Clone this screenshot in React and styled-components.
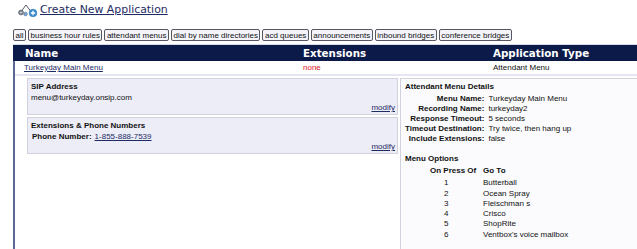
import styled, { createGlobalStyle } from 'styled-components';

const GlobalStyle = createGlobalStyle`
  body {
    margin: 0;
    background: #ffffff;
    font-family: "Liberation Sans", Arial, sans-serif;
    font-size: 8px;
    color: #111111;
    overflow: hidden;
  }
`;

const Page = styled.div`
  width: 637px;
  height: 249px;
  overflow: hidden;
`;

const TitleBar = styled.div`
  display: flex;
  align-items: center;
  gap: 2px;
  padding: 1px 0 0 17px;
  height: 17px;
`;

const Title = styled.a`
  font-family: "DejaVu Sans", Verdana, sans-serif;
  font-size: 10.9px;
  color: #1d2b63;
  text-decoration: underline;
`;

const Filters = styled.div`
  display: flex;
  gap: 2px;
  padding: 11px 0 0 13px;
`;

const FilterButton = styled.span`
  display: inline-flex;
  align-items: center;
  height: 12px;
  padding: 0 1.5px;
  border: 1px solid #56565e;
  border-radius: 2px;
  background: #f4f4fa;
  font-size: 8px;
  color: #111;
  box-sizing: border-box;
`;

const Table = styled.div`
  margin: 3px 0 0 13px;
  width: 640px;
`;

const HeaderRow = styled.div`
  display: grid;
  grid-template-columns: 278px 190px 1fr;
  height: 16px;
  align-items: center;
  padding-left: 12px;
  background: #0c1a4a;
  color: #ffffff;
  font-family: "DejaVu Sans", Verdana, sans-serif;
  font-weight: bold;
  font-size: 10.3px;
  border-top: 1px solid #d8dbe6;
`;

const Body = styled.div`
  border-left: 2px solid #5b6896;
  height: 200px;
`;

const DataRow = styled.div`
  display: grid;
  grid-template-columns: 279px 190px 1fr;
  height: 13px;
  align-items: center;
  padding: 0 0 0 9px;
  border-bottom: 2px solid #e6e6f2;
`;

const NameLink = styled.a`
  color: #1d2b63;
  text-decoration: underline;
`;

const Cell = styled.span`
  color: ${({ $red }) => ($red ? '#e0141e' : '#111')};
`;

const Detail = styled.div`
  display: grid;
  grid-template-columns: 371px 1fr;
  gap: 2px;
  padding: 2px 0 0 12px;
`;

const LeftCol = styled.div`
  display: flex;
  flex-direction: column;
  gap: 2px;
`;

const InfoBox = styled.div`
  background: #ededf8;
  border: 1px solid #d2d2de;
  padding: 2px 2px 1px 3px;
  height: 37px;
  box-sizing: border-box;
  display: flex;
  flex-direction: column;
`;

const BoxTitle = styled.div`
  font-weight: bold;
  line-height: 11px;
`;

const BoxLine = styled.div`
  line-height: 11px;
  padding-left: ${({ $indent }) => ($indent ? '1px' : '0')};
`;

const Label = styled.b`
  margin-right: 3px;
`;

const Link = styled.a`
  color: #1d2b63;
  text-decoration: underline;
`;

const Modify = styled.a`
  margin-top: auto;
  align-self: flex-end;
  color: #1d2b63;
  text-decoration: underline;
  line-height: 10px;
`;

const RightBox = styled.div`
  background: #fbfbfd;
  border: 1px solid #d2d2de;
  border-right: none;
  padding: 3px 0 0 4px;
  height: 180px;
`;

const DetailGrid = styled.div`
  display: grid;
  grid-template-columns: max-content 1fr;
  column-gap: 4px;
  line-height: 10px;
  margin-top: 2px;
  white-space: nowrap;
`;

const DetailLabel = styled.span`
  font-weight: bold;
  text-align: right;
`;

const SectionTitle = styled.div`
  font-weight: bold;
  line-height: 10px;
  margin-top: ${({ $gap }) => $gap || 0};
`;

const OptionsGrid = styled.div`
  display: grid;
  grid-template-columns: 78px 1fr;
  line-height: 10.3px;
  margin-top: 2px;
  white-space: nowrap;
`;

const PressCell = styled.span`
  padding-left: ${({ $head }) => ($head ? '25px' : '39px')};
  font-weight: ${({ $head }) => ($head ? 'bold' : 'normal')};
  margin-bottom: ${({ $head }) => ($head ? '2px' : '0')};
`;

const GoCell = styled.span`
  font-weight: ${({ $head }) => ($head ? 'bold' : 'normal')};
  margin-bottom: ${({ $head }) => ($head ? '2px' : '0')};
`;

function AppIcon() {
  return (
    <svg width="21" height="15" viewBox="0 0 21 15">
      <path d="M3 11 L9 3 L15 11" fill="none" stroke="#555a66" strokeWidth="1" />
      <circle cx="4" cy="10.5" r="2.4" fill="#8a9099" stroke="#5a5f69" strokeWidth="0.8" />
      <circle cx="4" cy="10.5" r="0.8" fill="#e0e3e8" />
      <circle cx="8.5" cy="12" r="1.8" fill="#7fa5cc" stroke="#50709a" strokeWidth="0.6" />
      <circle cx="16" cy="11" r="3.8" fill="#3b8fd6" stroke="#236aa8" strokeWidth="0.6" />
      <path d="M16 8.8 V13.2 M13.8 11 H18.2" stroke="#ffffff" strokeWidth="1.3" />
    </svg>
  );
}

const filters = [
  'all',
  'business hour rules',
  'attendant menus',
  'dial by name directories',
  'acd queues',
  'announcements',
  'inbound bridges',
  'conference bridges',
];

const details = [
  ['Menu Name:', 'Turkeyday Main Menu'],
  ['Recording Name:', 'turkeyday2'],
  ['Response Timeout:', '5 seconds'],
  ['Timeout Destination:', 'Try twice, then hang up'],
  ['Include Extensions:', 'false'],
];

const options = [
  ['1', 'Butterball'],
  ['2', 'Ocean Spray'],
  ['3', 'Fleischman s'],
  ['4', 'Crisco'],
  ['5', 'ShopRite'],
  ['6', "Ventbox's voice mailbox"],
];

export default function App() {
  return (
    <Page>
      <GlobalStyle />
      <TitleBar>
        <AppIcon />
        <Title href="#">Create New Application</Title>
      </TitleBar>
      <Filters>
        {filters.map((f) => (
          <FilterButton key={f}>{f}</FilterButton>
        ))}
      </Filters>
      <Table>
        <HeaderRow>
          <span>Name</span>
          <span>Extensions</span>
          <span>Application Type</span>
        </HeaderRow>
        <Body>
          <DataRow>
            <NameLink href="#">Turkeyday Main Menu</NameLink>
            <Cell $red>none</Cell>
            <Cell>Attendant Menu</Cell>
          </DataRow>
          <Detail>
            <LeftCol>
              <InfoBox>
                <BoxTitle>SIP Address</BoxTitle>
                <BoxLine>menu@turkeyday.onsip.com</BoxLine>
                <Modify href="#">modify</Modify>
              </InfoBox>
              <InfoBox>
                <BoxTitle>Extensions &amp; Phone Numbers</BoxTitle>
                <BoxLine $indent>
                  <Label>Phone Number:</Label>
                  <Link href="#">1-855-888-7539</Link>
                </BoxLine>
                <Modify href="#">modify</Modify>
              </InfoBox>
            </LeftCol>
            <RightBox>
              <SectionTitle>Attendant Menu Details</SectionTitle>
              <DetailGrid>
                {details.map(([k, v]) => [
                  <DetailLabel key={k}>{k}</DetailLabel>,
                  <span key={k + 'v'}>{v}</span>,
                ])}
              </DetailGrid>
              <SectionTitle $gap="10px">Menu Options</SectionTitle>
              <OptionsGrid>
                <PressCell $head>On Press Of</PressCell>
                <GoCell $head>Go To</GoCell>
                {options.map(([n, g]) => [
                  <PressCell key={n}>{n}</PressCell>,
                  <GoCell key={n + 'g'}>{g}</GoCell>,
                ])}
              </OptionsGrid>
            </RightBox>
          </Detail>
        </Body>
      </Table>
    </Page>
  );
}
